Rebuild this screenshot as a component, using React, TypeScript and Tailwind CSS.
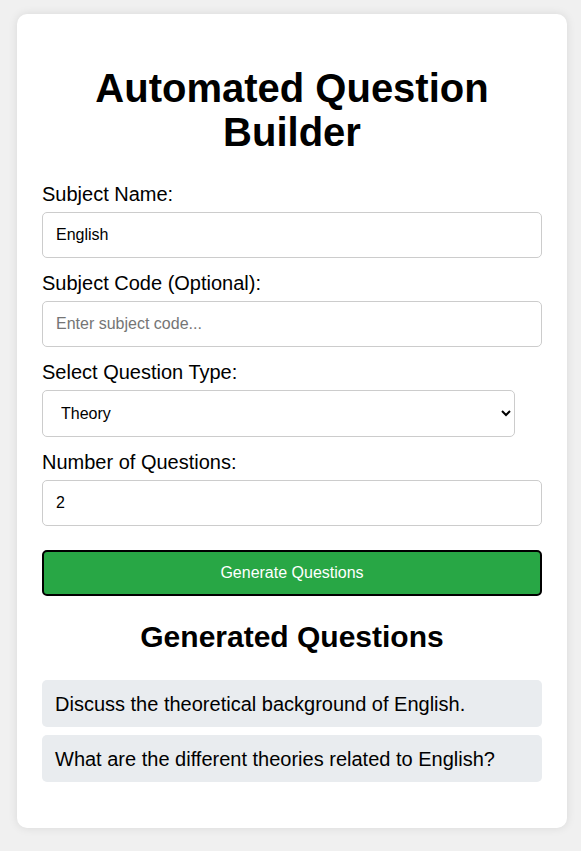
import React, { useState } from "react";

export default function App() {
  const [subject, setSubject] = useState("English");
  const [code, setCode] = useState("");
  const [type, setType] = useState("Theory");
  const [count, setCount] = useState("2");
  const questions = [
    "Discuss the theoretical background of English.",
    "What are the different theories related to English?",
  ];
  return (
    <div
      className="min-h-[851px] w-full bg-[#f0f0f0] pt-[14px] pb-[23px] px-[17px]"
      style={{ fontFamily: '"Liberation Sans", Arial, sans-serif' }}
    >
      <div className="w-[550px] rounded-[10px] bg-white p-[25px] shadow-[0_0_10px_rgba(0,0,0,0.1)]">
        <h1 className="mt-[27px] mb-[29px] text-center text-[40px] font-bold leading-[44px] text-black">
          Automated Question Builder
        </h1>
        <div className="flex flex-col">
          <label className="mb-[6px] text-[20px] leading-[23px] text-black">Subject Name:</label>
          <input
            value={subject}
            onChange={(e) => setSubject(e.target.value)}
            className="mb-[14px] h-[46px] w-[500px] rounded-[5px] border border-[#ccc] px-[13px] text-[16px] text-black outline-none"
          />
          <label className="mb-[6px] text-[20px] leading-[23px] text-black">Subject Code (Optional):</label>
          <input
            value={code}
            onChange={(e) => setCode(e.target.value)}
            placeholder="Enter subject code..."
            className="mb-[14px] h-[46px] w-[500px] rounded-[5px] border border-[#ccc] px-[13px] text-[16px] text-black outline-none placeholder:text-[#757575]"
          />
          <label className="mb-[6px] text-[20px] leading-[23px] text-black">Select Question Type:</label>
          <select
            value={type}
            onChange={(e) => setType(e.target.value)}
            className="mb-[14px] h-[47px] w-[473px] rounded-[5px] border border-[#ccc] bg-white pl-[14px] pr-[10px] text-[16px] text-black outline-none"
          >
            <option>Theory</option>
            <option>Objective</option>
            <option>Practical</option>
          </select>
          <label className="mb-[6px] text-[20px] leading-[23px] text-black">Number of Questions:</label>
          <input
            value={count}
            onChange={(e) => setCount(e.target.value)}
            className="mb-[24px] h-[46px] w-[500px] rounded-[5px] border border-[#ccc] px-[13px] text-[16px] text-black outline-none"
          />
          <button className="h-[46px] w-[500px] rounded-[5px] border-2 border-black bg-[#28a745] text-[16px] text-white">
            Generate Questions
          </button>
        </div>
        <h2 className="mt-[24px] mb-[26px] text-center text-[30px] font-bold leading-[34px] text-black">
          Generated Questions
        </h2>
        <div className="flex flex-col gap-[8px]">
          {questions.map((q) => (
            <div key={q} className="flex h-[47px] items-center rounded-[5px] bg-[#e9ecef] px-[13px] text-[20px] text-black">
              {q}
            </div>
          ))}
        </div>
        <div className="h-[21px]" />
      </div>
    </div>
  );
}
